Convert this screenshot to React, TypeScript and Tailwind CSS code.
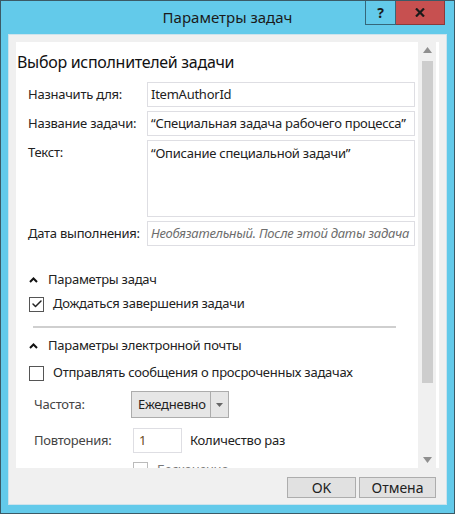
import { Check } from "lucide-react";

const font = { fontFamily: '"Noto Sans", "Open Sans", sans-serif' };

const Field = ({ label, value, italic }: { label: string; value: string; italic?: boolean }) => (
  <div className="flex items-center">
    <div className="w-[131px] whitespace-nowrap pl-3 text-[13px] tracking-[-0.25px] text-[#222]">{label}</div>
    <div
      className={`flex h-[25px] w-[268px] items-center overflow-hidden whitespace-nowrap border border-[#dedee3] pl-[3px] text-[13px] tracking-[-0.25px] ${
        italic ? "italic text-[#6d6d6d]" : "text-[#222]"
      }`}
    >
      {value}
    </div>
  </div>
);

const Chevron = () => (
  <svg width="9" height="6" viewBox="0 0 9 6" className="mr-[10px]">
    <path d="M1 5 L4.5 1.5 L8 5" stroke="#111" strokeWidth="2" fill="none" />
  </svg>
);

const Box = ({ checked }: { checked?: boolean }) => (
  <div className="flex h-[15px] w-[15px] items-center justify-center border border-[#555] bg-white">
    {checked && <Check size={12} strokeWidth={3} color="#222" />}
  </div>
);

export default function App() {
  return (
    <div className="h-[517px] w-[455px] bg-white" style={font}>
      <div className="flex h-[514px] w-[455px] flex-col border border-[#3b5a66] bg-[#63caea]">
        {/* Заголовок */}
        <div className="relative flex h-[33px] items-center justify-center">
          <span className="text-[15px] text-[#1b1b1b]">Параметры задач</span>
          <div className="absolute right-[9px] top-0 flex">
            <div className="flex h-[24px] w-[31px] items-center justify-center border border-t-0 border-[#35677a] text-[14px] font-bold text-[#1a1a1a]">
              ?
            </div>
            <div className="flex h-[24px] w-[49px] items-center justify-center border border-l-0 border-t-0 border-[#8a3a3a] bg-[#c75050]">
              <svg width="10" height="9" viewBox="0 0 10 9">
                <path d="M1 0.5 L9 8.5 M9 0.5 L1 8.5" stroke="#1a1a1a" strokeWidth="2.2" />
              </svg>
            </div>
          </div>
        </div>

        {/* Тело окна */}
        <div className="mx-[7px] flex flex-1 flex-col border border-[#cde3ec] bg-[#f0f0f0] px-[7px] pt-[7px]">
          <div className="flex h-[426px] bg-white">
            <div className="flex-1 overflow-hidden text-[13px] tracking-[-0.25px]">
              <div className="pl-[1px] pt-[8px] text-[16px] leading-[24px] tracking-[-0.3px] text-[#111]">Выбор исполнителей задачи</div>
              <div className="mt-[8px] flex flex-col gap-[4px]">
                <Field label="Назначить для:" value="ItemAuthorId" />
                <Field label="Название задачи:" value="“Специальная задача рабочего процесса”" />
                <div className="flex">
                  <div className="w-[131px] pl-3 pt-[3px] text-[#222]">Текст:</div>
                  <div className="h-[77px] w-[268px] border border-[#dedee3] pl-[3px] pt-[3px] text-[#222]">
                    “Описание специальной задачи”
                  </div>
                </div>
                <Field label="Дата выполнения:" value="Необязательный. После этой даты задача" italic />
              </div>

              <div className="ml-[13px] mt-[22px] flex h-[24px] items-center text-[#222]">
                <Chevron />
                Параметры задач
              </div>
              <div className="ml-[13px] mt-[1px] flex h-[22px] items-center gap-[9px] text-[#222]">
                <Box checked />
                Дождаться завершения задачи
              </div>
              <div className="ml-[17px] mr-[22px] mt-[11px] h-[2px] bg-[#cfcfcf]" />
              <div className="ml-[13px] mt-[6px] flex h-[24px] items-center text-[#222]">
                <Chevron />
                Параметры электронной почты
              </div>
              <div className="ml-[13px] mt-[4px] flex h-[22px] items-center gap-[9px] text-[#222]">
                <Box />
                Отправлять сообщения о просроченных задачах
              </div>

              <div className="mt-[7px] flex items-center">
                <div className="w-[115px] pl-[18px] text-[#444]">Частота:</div>
                <div className="flex h-[27px] w-[98px] items-center border border-[#acacac] bg-[#e6e6e6] text-[#222]">
                  <span className="flex-1 pl-[6px]">Ежедневно</span>
                  <div className="flex h-full w-[18px] items-center justify-center border-l border-[#acacac]">
                    <svg width="7" height="4" viewBox="0 0 7 4">
                      <path d="M0 0 L7 0 L3.5 4 Z" fill="#666" />
                    </svg>
                  </div>
                </div>
              </div>
              <div className="mt-[10px] flex items-center">
                <div className="w-[117px] pl-[18px] text-[#444]">Повторения:</div>
                <div className="flex h-[25px] w-[49px] items-center border border-[#dedee3] pl-[5px] text-[#6a4a1a]">
                  1
                </div>
                <span className="ml-[8px] text-[#222]">Количество раз</span>
              </div>
              <div className="ml-[117px] mt-[7px] flex items-center gap-[9px] text-[#777]">
                <div className="h-[15px] w-[15px] border border-[#bbb]" />
                Бесконечно
              </div>
            </div>

            {/* Полоса прокрутки */}
            <div className="mr-[3px] flex w-[18px] flex-col items-center bg-[#f0f0f0] py-[5px]">
              <svg width="9" height="6" viewBox="0 0 9 6">
                <path d="M0 6 L4.5 0 L9 6 Z" fill="#8f8f8f" />
              </svg>
              <div className="mt-[8px] h-[322px] w-[11px] bg-[#cdcdcd]" />
              <div className="flex-1" />
              <svg width="9" height="6" viewBox="0 0 9 6">
                <path d="M0 0 L9 0 L4.5 6 Z" fill="#8f8f8f" />
              </svg>
            </div>
          </div>

          {/* Кнопки */}
          <div className="mt-[9px] flex justify-end gap-[3px] pr-[3px]">
            <button className="h-[21px] w-[69px] border border-[#adadad] bg-[#e1e1e1] text-[14px] leading-none text-[#222]">
              OK
            </button>
            <button className="h-[21px] w-[77px] border border-[#adadad] bg-[#e1e1e1] text-[14px] leading-none text-[#222]">
              Отмена
            </button>
          </div>
        </div>
        <div className="h-[8px]" />
      </div>
    </div>
  );
}
